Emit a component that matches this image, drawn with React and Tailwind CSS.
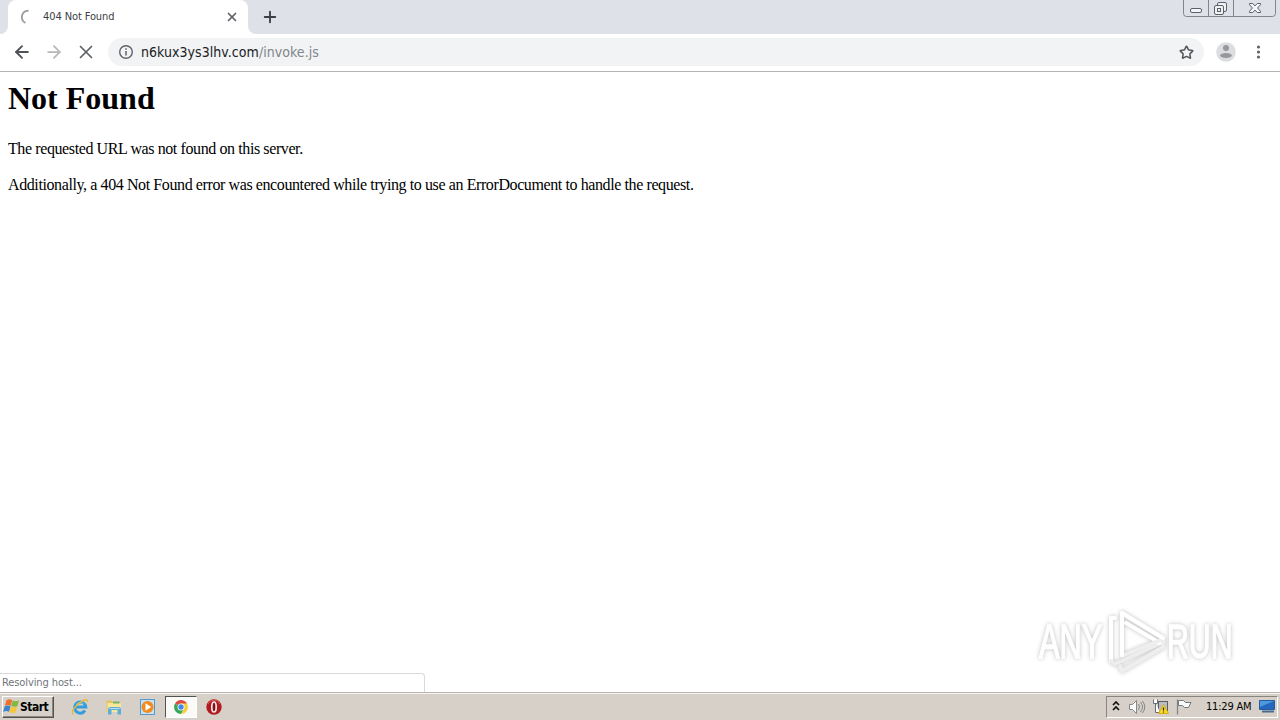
import { ArrowLeft, ArrowRight, X, Plus, Star } from "lucide-react";

const TabShape = () => (
  <div className="relative flex h-[34px] w-[240px] items-center rounded-t-lg bg-white">
    <svg className="absolute bottom-0 -left-2" width="8" height="8">
      <path d="M8 0v8H0a8 8 0 0 0 8-8z" fill="#fff" />
    </svg>
    <svg className="absolute -right-2 bottom-0" width="8" height="8">
      <path d="M0 0v8h8a8 8 0 0 1-8-8z" fill="#fff" />
    </svg>
    <svg className="ml-[11px]" width="16" height="16" viewBox="0 0 16 16" fill="none">
      <path d="M9.500 1.800C5.200 1.600 2.800 4.600 2.800 8c0 2.400 1.300 4.800 3.700 5.800" stroke="#9c9ea1" strokeWidth="1.900" />
    </svg>
    <span className="ml-2 w-[170px] pt-px text-[11px] tracking-[-0.1px] whitespace-nowrap text-[#3c4043]">
      404 Not Found
    </span>
    <X className="ml-[12px]" size={14} strokeWidth={3} color="#5f6368" />
  </div>
);

const WindowControls = () => (
  <svg className="mr-[4px] ml-auto self-start" width="93" height="18" fill="none" stroke="#5c6069">
    <path d="M.5 0v13.500a3 3 0 0 0 3 3h86a3 3 0 0 0 3-3V0M25.500 0v16M50.500 0v16" stroke="#80848d" />
    <rect x="7.500" y="8.500" width="11" height="4" rx="1.500" fill="#f4f5f7" />
    <rect x="34.500" y="2.500" width="9" height="9" rx="1.500" fill="#f0f1f3" />
    <rect x="31.500" y="5.500" width="9" height="9" rx="1.500" fill="#f0f1f3" />
    <rect x="34.500" y="8.500" width="3" height="3" />
    <path
      d="M66.500 3.500h3.300l2.200 2.400 2.200-2.400h3.300v1.200L74.600 8l2.900 3.300v1.200h-3.300L72 10.100l-2.200 2.400h-3.300v-1.200L69.400 8l-2.900-3.300z"
      fill="#f4f5f7"
    />
  </svg>
);

const Toolbar = () => (
  <div className="flex h-[38px] items-center border-b border-[#b2b4b6] bg-white pb-px">
    <ArrowLeft className="ml-[12px]" size={20} strokeWidth={2.3} color="#505458" />
    <ArrowRight className="ml-[12px]" size={20} strokeWidth={2.1} color="#b5b7b9" />
    <X className="ml-[11px]" size={22} strokeWidth={1.9} color="#5f6368" />
    <div className="ml-[11px] flex h-[28px] w-[1096px] items-center rounded-full bg-[#f1f3f4] pr-[10px] pl-[10px]">
      <svg width="16" height="16" viewBox="0 0 16 16" fill="none" stroke="#5f6368">
        <circle cx="8" cy="8" r="6.300" strokeWidth="1.400" />
        <path d="M8 7v4.500M8 4.200v1.600" strokeWidth="1.500" />
      </svg>
      <span className="ml-[7px] text-[14px] tracking-[0.05px] whitespace-nowrap text-[#202124]">
        n6kux3ys3lhv.com<span className="text-[#80868b]">/invoke.js</span>
      </span>
      <Star className="ml-auto" size={15} strokeWidth={2.500} color="#54585d" />
    </div>
    <svg className="ml-[12px]" width="20" height="20">
      <circle cx="10" cy="10" r="9.800" fill="#dcdddf" />
      <circle cx="10" cy="6" r="3" fill="#96999c" />
      <ellipse cx="10" cy="13.500" rx="5.800" ry="2.600" fill="#96999c" />
    </svg>
    <svg className="ml-[18px]" width="10" height="16" fill="#5f6368">
      <circle cx="4.500" cy="3" r="1.600" />
      <circle cx="4.500" cy="8" r="1.600" />
      <circle cx="4.500" cy="13" r="1.600" />
    </svg>
  </div>
);

const Watermark = () => (
  <svg
    className="absolute top-[532px] left-[1030px] drop-shadow-[0_0_2px_rgba(0,0,0,0.25)]"
    width="210"
    height="80"
  >
    <defs>
      <linearGradient id="fade" gradientUnits="userSpaceOnUse" x1="0" y1="38" x2="0" y2="40">
        <stop offset="0" stopColor="#ffffff" />
        <stop offset="1" stopColor="#ececec" />
      </linearGradient>
    </defs>
    <g
      className="font-['Liberation_Sans',sans-serif] text-[48px]"
      fill="url(#fade)"
      stroke="url(#fade)"
      strokeWidth="1.500"
    >
      <text transform="translate(9 54) scale(.64 1)">ANY</text>
      <text transform="translate(137 54) scale(.63 1)">RUN</text>
    </g>
    <g fill="none" strokeWidth="4" strokeLinejoin="round" strokeLinecap="round">
      <path d="M81 57V14h4" stroke="#fff" />
      <path d="M81 57l4 3 44-20" stroke="#ededed" />
      <path d="M92 49V9l41 25-3 5-34-20" stroke="#fff" />
      <path d="M92 52l41-17v8L92 67l-2-5" stroke="#eeeeee" />
      <path d="M92 9v42M92 9l41 25" stroke="#fff" />
    </g>
  </svg>
);

const StartFlag = () => (
  <svg width="17" height="17" viewBox="0 0 17 16">
    <path d="M3.500 1.800C5.500 .3 7.300.6 9.200 1.700L7.700 7.200C5.800 6.200 4 6.200 1.900 7.300z" fill="#ed702f" />
    <path d="M9.700 2c2 1.100 4 1 6.400-.2l-1.600 5.600c-2 1.200-4 1.200-6.300.1z" fill="#82b944" />
    <path d="M1.700 7.900c2-1.200 4-1 5.800-.1L6 13.300c-1.800-1-3.600-1-5.900.1z" fill="#3b83cd" />
    <path d="M8 8.100c2 1.100 4 1 6.300-.1l-1.500 5.700c-2.100 1.100-4.100 1.100-6.300.1z" fill="#f5c53b" />
  </svg>
);

const ExplorerIcon = () => (
  <svg width="18" height="18" viewBox="0 0 18 18" fill="none">
    <path d="M14 12.500a5.600 5.600 0 1 1 .8-3.600H5" stroke="#329fdc" strokeWidth="3" />
    <path d="M12.500 5.800A5.300 5.300 0 0 0 5 6.800" stroke="#82c9ed" strokeWidth="1" />
    <path d="M2.500 16.200c-4-1.700 3.200-10.700 9.800-13.700 3-1.300 4.500-.8 4.200 1.700" stroke="#e5b83b" strokeWidth="1.400" />
  </svg>
);

const FolderIcon = () => (
  <svg width="18" height="18" viewBox="0 0 18 18">
    <path d="M1.500 2.500h5l1 1.500h8V14h-14z" fill="#e4c461" />
    <path d="M2.500 5h13.500v9H2.500z" fill="#f8e699" />
    <path d="M8 3.500h6.500v2H8z" fill="#73b465" />
    <path d="M3 16.500V11.500a2.500 2.500 0 0 1 2.500-2.500h8a2.500 2.500 0 0 1 2.500 2.500v5h-3.500V12h-6v4.500z" fill="#5baed9" />
    <path d="M4.500 10.500h10" stroke="#b8e0ef" />
  </svg>
);

const PlayerIcon = () => (
  <svg width="18" height="18" viewBox="0 0 18 18">
    <rect x="1.500" y="1.500" width="14" height="15" fill="#c5e1f4" stroke="#5699cb" />
    <circle cx="8.500" cy="9" r="6" fill="#f28a1c" />
    <path d="M6.500 5.200v7.600L12.300 9z" fill="#fff" />
  </svg>
);

const ChromeIcon = () => (
  <svg width="16" height="16" viewBox="0 0 16 16">
    <path d="M8 8L2 4.500a7 7 0 0 1 12 0z" fill="#dc4b3e" />
    <path d="M8 8L2 4.500A7 7 0 0 0 8 15l3-5z" fill="#39a65a" />
    <path d="M8 4.500h6A7 7 0 0 1 8 15l3-5z" fill="#f8cf38" />
    <circle cx="8" cy="8" r="3.500" fill="#fff" />
    <circle cx="8" cy="8" r="2.700" fill="#4389e8" />
  </svg>
);

const OperaIcon = () => (
  <svg width="16" height="16" viewBox="0 0 16 16">
    <circle cx="8" cy="8" r="7.700" fill="#b01a20" />
    <path d="M2 5a6.500 6.500 0 0 1 12 0" stroke="#d85d58" fill="none" />
    <ellipse cx="8" cy="8" rx="2.200" ry="5" fill="#7d1216" stroke="#f4e7e7" strokeWidth="1.700" />
  </svg>
);

const Tray = () => (
  <div className="mr-[2px] ml-auto flex h-[22px] w-[172px] items-center border border-t-[#89857e] border-r-white border-b-white border-l-[#89857e]">
    <svg className="ml-[5px]" width="8" height="11" fill="none" stroke="#111" strokeWidth="1.700">
      <path d="M1 4l3-3 3 3M1 9l3-3 3 3" />
    </svg>
    <svg className="ml-[8px]" width="18" height="18" viewBox="0 0 18 18" fill="none" stroke="#85878b">
      <path d="M1.500 6.500h3l4-4v13l-4-4h-3z" fill="#fafafa" />
      <path d="M10.500 6q2 3 0 6M12.500 4q4 5 0 10M14.500 3q4.500 6 0 12" />
    </svg>
    <svg className="ml-[6px]" width="18" height="18" viewBox="0 0 18 18">
      <rect x="6.500" y="3.500" width="9" height="9" fill="#b8bcc1" stroke="#5a5d63" />
      <path d="M1.500 1.500v4h4v-4M3.500 5.500v9h5" fill="#fff" stroke="#696c71" />
      <path d="M11.500 6.500l5 9h-10z" fill="#ffdc28" stroke="#d7ae15" />
      <path d="M11.500 9.500v3M11.500 13.500v1" stroke="#222" strokeWidth="1.300" />
    </svg>
    <svg className="ml-[5px]" width="18" height="18" viewBox="0 0 18 18" fill="#fafafa" stroke="#74777b">
      <path d="M3.500 2.500h5l2 2h5.500l-2.500 5h-4l-2-2h-4z" />
      <path d="M2.500 1.500v15" stroke="#808388" strokeWidth="1.300" />
    </svg>
    <span className="ml-[13px] w-[49px] pt-px text-[11px] tracking-[-0.2px] whitespace-nowrap text-black">11:29 AM</span>
    <svg className="ml-[4px]" width="17" height="15">
      <path d="M.5 1.500h15v9H.5z" fill="#2467bd" stroke="#255c9e" />
      <path d="M1 2h14L1 8z" fill="#4e98dd" />
      <path d="M3 12.500h12" stroke="#496b91" strokeWidth="2" />
    </svg>
  </div>
);

const Taskbar = () => (
  <div className="flex h-[28px] items-center border-t border-[#b9b5ae] bg-[#d6d0c8] shadow-[inset_0_1px_0_#f7f5f2]">
    <div className="ml-[2px] flex h-[22px] w-[52px] items-center border border-t-white border-r-[#55514c] border-b-[#55514c] border-l-white shadow-[inset_-1px_-1px_0_#8b867f]">
      <StartFlag />
      <span className="pt-px text-[12px] font-bold tracking-[-0.5px] text-black">Start</span>
    </div>
    <div className="ml-[17px] flex items-center gap-[16px]">
      <ExplorerIcon />
      <FolderIcon />
      <PlayerIcon />
    </div>
    <div className="ml-[8px] flex h-[22px] w-[32px] items-center justify-center border border-t-[#55514c] border-r-white border-b-white border-l-[#55514c] bg-[#fafaf9]">
      <ChromeIcon />
    </div>
    <div className="ml-[9px]">
      <OperaIcon />
    </div>
    <Tray />
  </div>
);

const App = () => {
  return (
    <div className="flex h-[720px] w-[1280px] flex-col overflow-hidden bg-white font-['DejaVu_Sans_Condensed','DejaVu_Sans',sans-serif]">
      <div className="flex h-[34px] items-center bg-[#dee1e8] pl-2">
        <TabShape />
        <Plus className="ml-[13px]" size={18} strokeWidth={2.5} color="#3c4043" />
        <WindowControls />
      </div>
      <Toolbar />

      {/* Page contents */}
      <div className="relative flex h-[620px] flex-col">
        <main className="px-2 font-['Liberation_Serif',serif] text-black">
          <h1 className="mt-[8px] text-[32px] leading-[37px] font-bold">Not Found</h1>
          <p className="mt-[23px] text-[16px] leading-[18px] tracking-[-0.4px] whitespace-nowrap">
            The requested URL was not found on this server.
          </p>
          <p className="mt-[18px] text-[16px] leading-[18px] tracking-[-0.4px] whitespace-nowrap">
            Additionally, a 404 Not Found error was encountered while trying to use an ErrorDocument to handle the request.
          </p>
        </main>
        <Watermark />
        <div className="mt-auto flex h-[19px] w-[425px] items-center rounded-tr border-t border-r border-[#d8d9da] bg-white pt-px pl-[2px] text-[11px] tracking-[-0.1px] text-[#70757a]">
          Resolving host...
        </div>
      </div>
      <Taskbar />
    </div>
  );
};

export default App;
